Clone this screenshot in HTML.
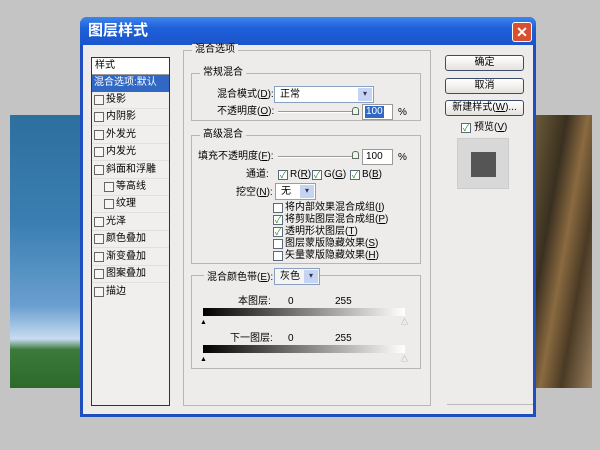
<!DOCTYPE html><html><head><meta charset="utf-8"><style>
*{margin:0;padding:0;box-sizing:border-box}
body{width:600px;height:450px;background:#c4c4c4;position:relative;overflow:hidden;font-family:"Liberation Sans","Noto Sans CJK SC",sans-serif;font-size:10px;color:#000;line-height:12px}
.a{position:absolute;white-space:nowrap}
.chk{position:absolute;width:10px;height:10px;border:1px solid #5a6a7a;background:#fff;font-size:9px;line-height:8px;text-align:center;color:#2a8a2a}
.grp{position:absolute;border:1px solid #b8b6b2;}
.lg{position:absolute;background:#eeeceb;padding:0 3px;top:-7px;left:8px;font-size:10px;line-height:12px}
.btn{position:absolute;left:445px;width:79px;height:16px;border:1px solid #3c4c6c;border-radius:3px;background:linear-gradient(#fff,#e4e2dc);text-align:center;line-height:14px;font-size:10px}
.dd{position:absolute;background:#fff;border:1px solid #8aa0c0;line-height:12px}
.dd i{position:absolute;right:1px;top:1px;bottom:1px;width:14px;background:#c6d4f4;font-style:normal;font-size:8px;text-align:center;color:#335}
.li{position:absolute;left:92px;width:77px;height:17px;border-bottom:1px solid #e2e0dc;line-height:16px;font-size:10px;padding-left:14px}
.li b{position:absolute;left:2px;top:3px;width:10px;height:10px;border:1px solid #666;background:#f6f6f6}
</style></head><body>
<div class="a" style="left:10px;top:115px;width:70px;height:273px;background:linear-gradient(#2d6f9e,#3b7fb2 40%,#6a9fd0 70%,#c8dcf0 82%,#3a7a3a 86%,#2c6a2c)"></div>
<div class="a" style="left:536px;top:115px;width:56px;height:273px;background:linear-gradient(100deg,#6a5a38,#3a3020 30%,#8a6a40 50%,#4a3a24 70%,#9a8060)"></div>
<div class="a" style="left:80px;top:17px;width:456px;height:400px;background:#1f4fbf;border-radius:7px 7px 0 0"></div>
<div class="a" style="left:80px;top:17px;width:456px;height:28px;background:linear-gradient(#3c86ee,#1f5fd8 40%,#1a55cc);border-radius:7px 7px 0 0"></div>
<div class="a" style="left:88px;top:22px;color:#fff;font-size:15px;line-height:18px;font-weight:bold">图层样式</div>
<div class="a" style="left:512px;top:22px;width:20px;height:20px;background:#d85030;border:1px solid #fff;border-radius:3px;color:#fff;font-size:14px;line-height:18px;text-align:center;font-weight:bold">✕</div>
<div class="a" style="left:83px;top:45px;width:450px;height:369px;background:#eeeceb"></div>
<div class="a" style="left:91px;top:57px;width:79px;height:349px;border:1px solid #333;background:#f0efee"></div>
<div class="a" style="left:92px;top:58px;width:77px;height:17px;background:#fff;border-bottom:1px solid #999;line-height:16px;padding-left:3px">样式</div>
<div class="a" style="left:92px;top:75px;width:77px;height:17px;background:#3168c4;color:#fff;line-height:16px;padding-left:2px">混合选项:默认</div>
<div class="li" style="top:92px"><b></b>投影</div>
<div class="li" style="top:109px"><b></b>内阴影</div>
<div class="li" style="top:127px"><b></b>外发光</div>
<div class="li" style="top:144px"><b></b>内发光</div>
<div class="li" style="top:162px"><b></b>斜面和浮雕</div>
<div class="li" style="top:179px;padding-left:24px"><b style="left:12px"></b>等高线</div>
<div class="li" style="top:196px;padding-left:24px"><b style="left:12px"></b>纹理</div>
<div class="li" style="top:214px"><b></b>光泽</div>
<div class="li" style="top:231px"><b></b>颜色叠加</div>
<div class="li" style="top:249px"><b></b>渐变叠加</div>
<div class="li" style="top:266px"><b></b>图案叠加</div>
<div class="li" style="top:284px;border:0"><b></b>描边</div>
<div class="grp" style="left:183px;top:50px;width:248px;height:356px"><span class="lg">混合选项</span></div>
<div class="grp" style="left:191px;top:73px;width:230px;height:48px"><span class="lg">常规混合</span></div>
<div class="a" style="left:217px;top:89px">混合模式(<u>D</u>):</div>
<div class="dd" style="left:274px;top:86px;width:100px;height:17px;padding:2px 0 0 5px">正常<i>▾</i></div>
<div class="a" style="left:217px;top:106px">不透明度(<u>O</u>):</div>
<div class="a" style="left:278px;top:111px;width:78px;height:2px;border-top:1px solid #999;border-bottom:1px solid #fff"></div>
<div class="a" style="left:352px;top:107px;width:7px;height:8px;border:1px solid #666;background:#dfd;border-radius:3px 3px 0 0"></div>
<div class="a" style="left:362px;top:104px;width:31px;height:16px;background:#fff;border:1px solid #999"><span style="background:#3168c4;color:#fff;margin:1px 2px;display:inline-block;padding:0 1px">100</span></div>
<div class="a" style="left:398px;top:107px">%</div>
<div class="grp" style="left:191px;top:135px;width:230px;height:129px"><span class="lg">高级混合</span></div>
<div class="a" style="left:198px;top:151px">填充不透明度(<u>F</u>):</div>
<div class="a" style="left:278px;top:156px;width:78px;height:2px;border-top:1px solid #999;border-bottom:1px solid #fff"></div>
<div class="a" style="left:352px;top:151px;width:7px;height:8px;border:1px solid #666;background:#dfd;border-radius:3px 3px 0 0"></div>
<div class="a" style="left:362px;top:149px;width:31px;height:16px;background:#fff;border:1px solid #999;padding:1px 0 0 3px">100</div>
<div class="a" style="left:398px;top:152px">%</div>
<div class="a" style="left:246px;top:169px">通道:</div>
<div class="chk" style="left:278px;top:170px">✓</div><div class="a" style="left:290px;top:169px">R(<u>R</u>)</div>
<div class="chk" style="left:312px;top:170px">✓</div><div class="a" style="left:324px;top:169px">G(<u>G</u>)</div>
<div class="chk" style="left:350px;top:170px">✓</div><div class="a" style="left:362px;top:169px">B(<u>B</u>)</div>
<div class="a" style="left:236px;top:187px">挖空(<u>N</u>):</div>
<div class="dd" style="left:275px;top:183px;width:41px;height:17px;padding:2px 0 0 5px">无<i>▾</i></div>
<div class="chk" style="left:273px;top:203px"></div><div class="a" style="left:285px;top:202px">将内部效果混合成组(<u>I</u>)</div>
<div class="chk" style="left:273px;top:215px">✓</div><div class="a" style="left:285px;top:214px">将剪贴图层混合成组(<u>P</u>)</div>
<div class="chk" style="left:273px;top:227px">✓</div><div class="a" style="left:285px;top:226px">透明形状图层(<u>T</u>)</div>
<div class="chk" style="left:273px;top:239px"></div><div class="a" style="left:285px;top:238px">图层蒙版隐藏效果(<u>S</u>)</div>
<div class="chk" style="left:273px;top:251px"></div><div class="a" style="left:285px;top:250px">矢量蒙版隐藏效果(<u>H</u>)</div>
<div class="grp" style="left:191px;top:275px;width:230px;height:94px"></div>
<div class="a" style="left:204px;top:272px;background:#eeeceb;padding:0 3px">混合颜色带(<u>E</u>):</div>
<div class="dd" style="left:274px;top:268px;width:46px;height:17px;padding:2px 0 0 5px;background:#f4f4f4">灰色<i>▾</i></div>
<div class="a" style="left:238px;top:296px">本图层:</div><div class="a" style="left:288px;top:296px">0</div><div class="a" style="left:335px;top:296px">255</div>
<div class="a" style="left:203px;top:308px;width:202px;height:8px;background:linear-gradient(90deg,#000,#fff)"></div>
<div class="a" style="left:200px;top:317px;font-size:7px">▲</div><div class="a" style="left:401px;top:317px;font-size:7px;color:#999">△</div>
<div class="a" style="left:230px;top:333px">下一图层:</div><div class="a" style="left:288px;top:333px">0</div><div class="a" style="left:335px;top:333px">255</div>
<div class="a" style="left:203px;top:345px;width:202px;height:8px;background:linear-gradient(90deg,#000,#fff)"></div>
<div class="a" style="left:200px;top:354px;font-size:7px">▲</div><div class="a" style="left:401px;top:354px;font-size:7px;color:#999">△</div>
<div class="btn" style="top:55px">确定</div>
<div class="btn" style="top:78px">取消</div>
<div class="btn" style="top:100px">新建样式(<u>W</u>)...</div>
<div class="chk" style="left:461px;top:123px">✓</div><div class="a" style="left:474px;top:122px">预览(<u>V</u>)</div>
<div class="a" style="left:457px;top:138px;width:52px;height:51px;background:#d8d8d8;border:1px solid #ccc"></div>
<div class="a" style="left:471px;top:152px;width:25px;height:25px;background:#555"></div>
<div class="a" style="left:447px;top:404px;width:86px;height:1px;background:#bbb"></div>
</body></html>
